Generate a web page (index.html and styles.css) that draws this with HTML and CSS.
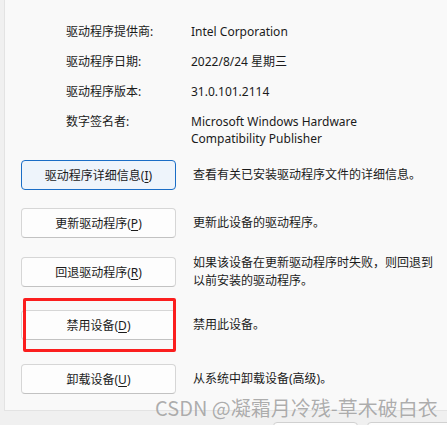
FILE: index.html
```html
<!DOCTYPE html>
<html lang="zh-CN">
<head>
<meta charset="utf-8">
<title>驱动程序</title>
<link rel="stylesheet" href="styles.css">
</head>
<body>
<div class="window">
  <div class="panel">
    <div class="info">
      <div class="label">驱动程序提供商:</div><div class="value">Intel Corporation</div>
      <div class="label">驱动程序日期:</div><div class="value">2022/8/24 星期三</div>
      <div class="label">驱动程序版本:</div><div class="value">31.0.101.2114</div>
      <div class="label">数字签名者:</div><div class="value">Microsoft Windows Hardware<br>Compatibility Publisher</div>
    </div>
    <div class="actions">
      <div class="action">
        <div class="btn focused">驱动程序详细信息(<u>I</u>)</div>
        <div class="desc">查看有关已安装驱动程序文件的详细信息。</div>
      </div>
      <div class="action gap-a">
        <div class="btn">更新驱动程序(<u>P</u>)</div>
        <div class="desc">更新此设备的驱动程序。</div>
      </div>
      <div class="action gap-b">
        <div class="btn">回退驱动程序(<u>R</u>)</div>
        <div class="desc">如果该设备在更新驱动程序时失败，则回退到<br>以前安装的驱动程序。</div>
      </div>
      <div class="action gap-c">
        <div class="btn">禁用设备(<u>D</u>)</div>
        <div class="desc">禁用此设备。</div>
      </div>
      <div class="action gap-d">
        <div class="btn">卸载设备(<u>U</u>)</div>
        <div class="desc">从系统中卸载设备(高级)。</div>
      </div>
    </div>
    <div class="highlight"></div>
  </div>
  <div class="footer">
    <div class="fbtn"></div>
    <div class="fbtn"></div>
  </div>
  <div class="watermark">CSDN @凝霜月冷残-草木破白衣</div>
</div>
</body>
</html>
```

FILE: styles.css
```css
html, body {
  margin: 0;
  padding: 0;
}
body {
  width: 447px;
  height: 425px;
  overflow: hidden;
  background: #f0f0f0;
  font-family: "Noto Sans", "Noto Sans CJK SC", sans-serif;
  font-size: 12px;
  color: #1b1b1b;
}
.window {
  position: relative;
  width: 447px;
  height: 425px;
  overflow: hidden;
  background: #f0f0f0;
}
.panel {
  position: relative;
  height: 411px;
  box-sizing: border-box;
  margin-left: 4px;
  background: #f9f9f9;
  border-left: 1px solid #e3e3e3;
  border-bottom: 1px solid #e3e3e3;
  padding-top: 23px;
}
.info {
  display: grid;
  grid-template-columns: 125px 1fr;
  row-gap: 13px;
  padding-left: 61px;
  line-height: 17px;
}
.actions {
  margin-top: 13px;
  padding-left: 16px;
  display: flex;
  flex-direction: column;
}
.action {
  display: flex;
  align-items: center;
  height: 30px;
  gap: 17px;
}
.gap-a { margin-top: 18px; }
.gap-b { margin-top: 19px; }
.gap-c { margin-top: 23px; }
.gap-d { margin-top: 24px; }
.btn {
  flex: none;
  width: 155px;
  height: 30px;
  box-sizing: border-box;
  display: flex;
  align-items: center;
  justify-content: center;
  background: #fdfdfd;
  border: 1px solid #d6d6d6;
  border-bottom-color: #c2c2c2;
  border-radius: 4px;
  color: #1b1b1b;
}
.btn u {
  text-decoration-thickness: 1px;
  text-underline-offset: 2px;
}
.btn.focused {
  background: #eef4fb;
  border: 1px solid #1a6dc6;
}
.desc {
  line-height: 18px;
  white-space: nowrap;
}
.highlight {
  position: absolute;
  left: 18px;
  top: 298px;
  width: 153px;
  height: 54px;
  box-sizing: border-box;
  border: 3px solid #fb1e1e;
  border-radius: 2px;
}
.footer {
  display: flex;
  gap: 9px;
  padding-left: 273px;
  padding-top: 11px;
}
.fbtn {
  flex: none;
  width: 85px;
  height: 24px;
  box-sizing: border-box;
  background: #fdfdfd;
  border: 1px solid #d0d0d0;
  border-radius: 4px;
}
.watermark {
  position: absolute;
  left: 155px;
  top: 397px;
  font-family: "Noto Sans CJK SC", sans-serif;
  font-size: 20px;
  line-height: 21px;
  letter-spacing: 0;
  white-space: nowrap;
  color: rgba(120, 120, 120, 0.6);
  text-shadow: 0 0 1px rgba(255, 255, 255, 0.6);
}
```
